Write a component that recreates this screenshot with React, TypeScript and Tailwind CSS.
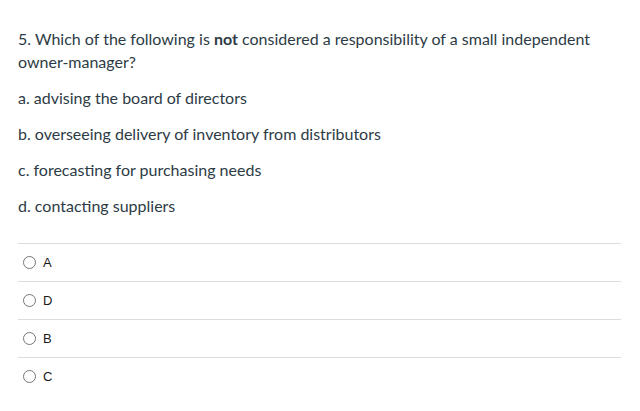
import React from 'react';

const options = [
  'a. advising the board of directors',
  'b. overseeing delivery of inventory from distributors',
  'c. forecasting for purchasing needs',
  'd. contacting suppliers',
];

const answers = ['A', 'D', 'B', 'C'];

const App: React.FC = () => {
  return (
    <div className="min-h-screen bg-white text-[#2d3b45] font-['Lato',sans-serif]">
      <div className="w-[621px] pl-[18px] pt-[27px]">
        <p className="text-[16px] leading-[23px]">
          5. Which of the following is <strong className="font-bold">not</strong> considered a responsibility of a small independent owner-manager?
        </p>
        <div className="mt-[13px] flex flex-col gap-[13px]">
          {options.map((o) => (
            <p key={o} className="text-[16px] leading-[23px]">{o}</p>
          ))}
        </div>
        <div className="mt-[26px]">
          {answers.map((a) => (
            <label key={a} className="flex h-[38px] items-center gap-[7px] border-t border-[#dcdcdc] pl-[5px]">
              <span className="h-[13px] w-[13px] rounded-full border border-[#767676] bg-white" />
              <span className="text-[13px] text-[#1a1a1a] font-['Liberation_Sans',sans-serif]">{a}</span>
            </label>
          ))}
        </div>
      </div>
    </div>
  );
};

export default App;
